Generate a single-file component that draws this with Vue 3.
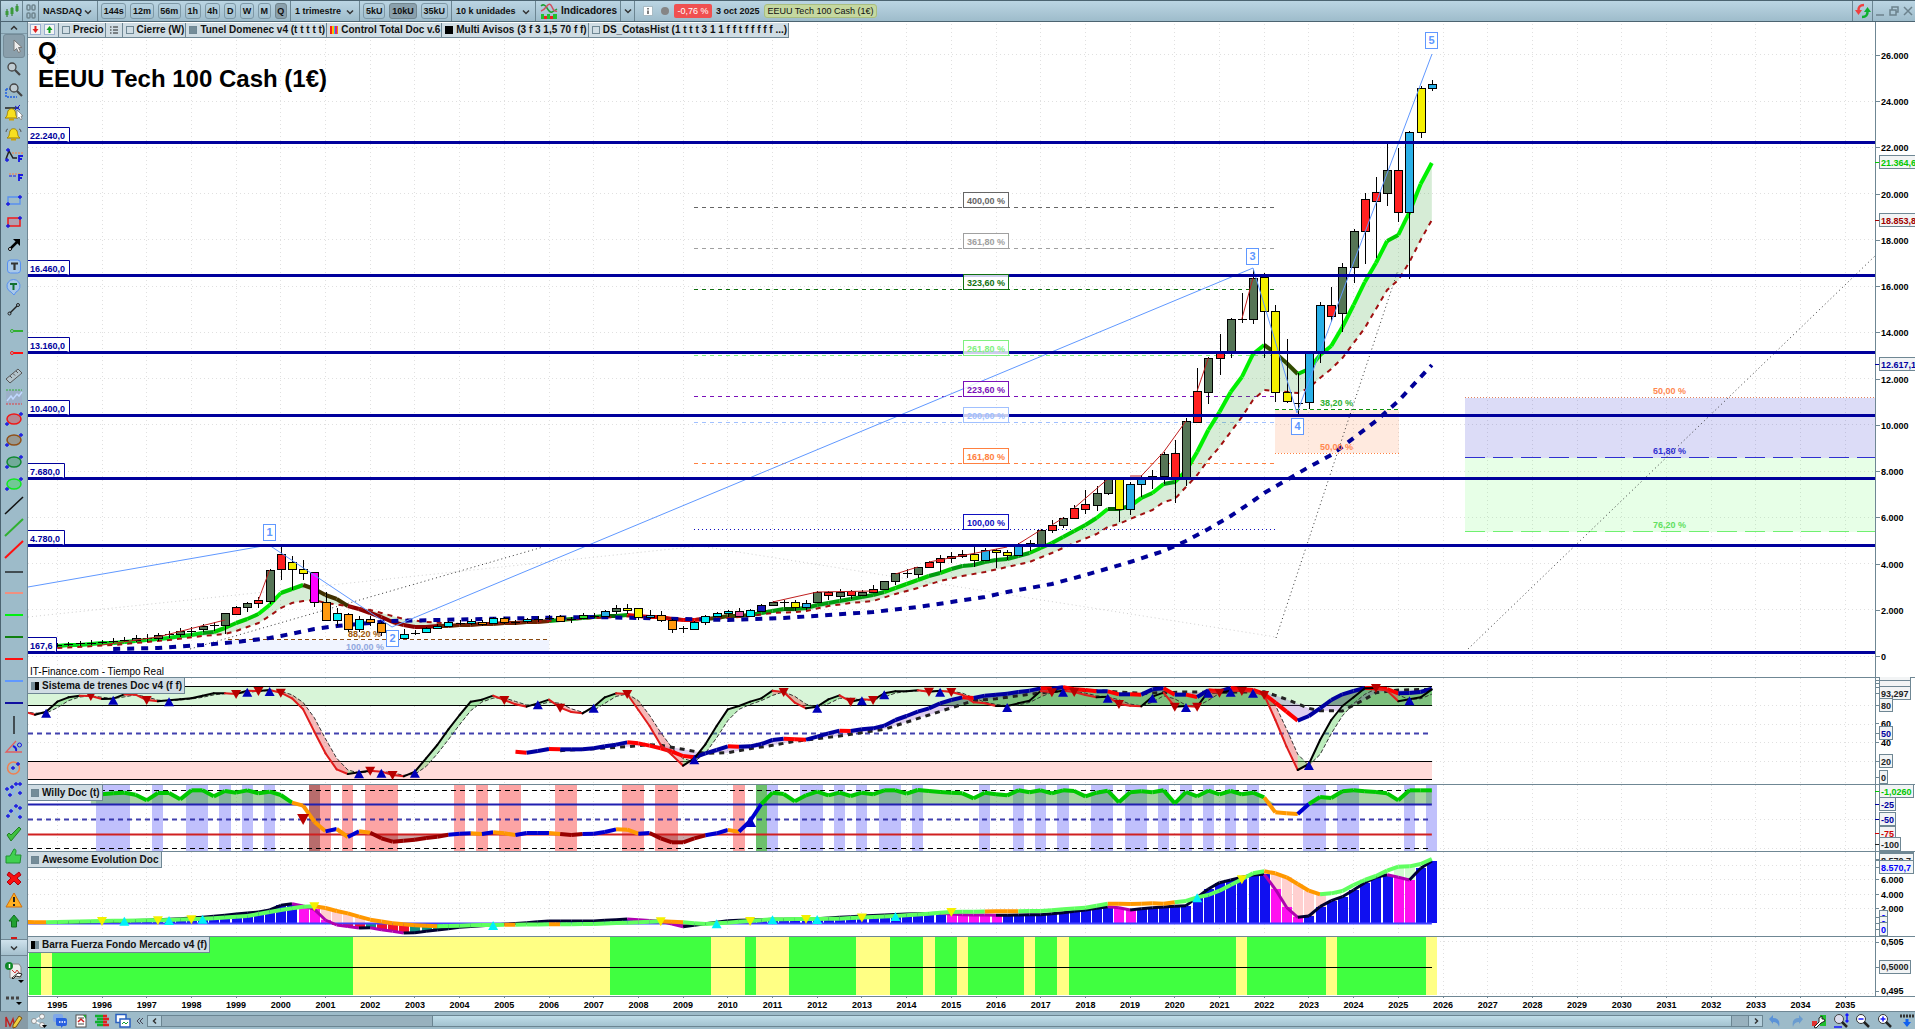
<script setup>
import { ref, computed, onMounted, onBeforeUnmount } from 'vue'

const AXIS = 40
const charts = ref(null)
const total = ref(window.innerWidth - 28)
let observer
onMounted(() => {
  observer = new ResizeObserver(([e]) => { total.value = Math.round(e.contentRect.width) })
  observer.observe(charts.value)
})
onBeforeUnmount(() => observer.disconnect())

const w = computed(() => total.value - AXIS)
const scale = computed(() => w.value / 1847)
/* quarter index (0 = first quarter of 1995) to x */
const X = (k) => (29.3 + 11.175 * k) * scale.value
/* design column to x */
const P = (x) => (x - 28) * scale.value
const T = (v) => 660 + v / 3
const price = (p) => 656 - p * 0.02312

const years = Array.from({ length: 41 }, (_, i) => 1995 + i)
const thousands = [0, 2000, 4000, 6000, 8000, 10000, 12000, 14000, 16000, 18000, 20000, 22000, 24000, 26000]
const fmt = (n) => (n ? n / 1000 + '.000' : '0')

const frames = ['144s', '12m', '56m', '1h', '4h', 'D', 'W', 'M', 'Q']
const units = ['5kU', '10kU', '35kU']

const G = '#567556', R = '#ff2020', Y = '#f5f000', B = '#29b0e8', C = '#00f0f5', O = '#ff9a10', K = '#000', M = '#ff00ff', N = '#1414b8', L = '#30e030'
/* quarter, body top, body bottom, high, low, colour */
const candles = [
  [0, 645, 645, 643, 647, K], [1, 644, 644, 642, 646, K], [2, 643, 643, 641, 646, K], [3, 643, 643, 640, 645, K], [4, 642, 642, 640, 644, K],
  [5, 641, 641, 638, 643, K], [6, 640, 640, 637, 642, K], [7, 638, 640, 635, 642, G], [8, 638, 638, 634, 642, K], [9, 635, 638, 633, 641, G], [10, 634, 634, 631, 638, K],
  [11, 631, 634, 628, 637, G], [12, 631, 631, 627, 636, K], [13, 626, 629, 624, 632, G], [14, 625, 625, 622, 631, K], [15, 613, 625, 613, 634, G],
  [16, 607, 614, 606, 615, R], [17, 603, 607, 602, 612, G], [18, 600, 603, 597, 608, R], [19, 570, 601, 569, 604, G], [20, 554, 569, 546, 580, R],
  [21, 562, 569, 556, 590, Y], [22, 569, 573, 560, 580, Y], [23, 572, 602, 572, 607, M], [24, 602, 620, 592, 621, O], [25, 613, 620, 608, 626, C],
  [26, 614, 629, 613, 632, O], [27, 619, 629, 616, 632, C], [28, 619, 622, 616, 626, O], [29, 623, 632, 622, 636, O], [31, 634, 638, 629, 639, C],
  [32, 633, 633, 630, 635, K], [33, 628, 632, 627, 633, C], [34, 626, 628, 624, 629, C], [35, 622, 626, 621, 627, C], [36, 623, 623, 620, 625, K],
  [37, 621, 623, 619, 625, C], [38, 622, 624, 620, 626, O], [39, 618, 623, 617, 624, C], [40, 618, 622, 617, 624, O], [41, 622, 622, 620, 625, K],
  [42, 619, 621, 618, 623, C], [43, 619, 619, 616, 622, K], [44, 618, 618, 615, 620, K], [45, 616, 621, 615, 622, O], [46, 619, 619, 617, 623, K],
  [47, 615, 618, 613, 619, L], [48, 616, 616, 613, 618, K], [49, 611, 616, 610, 617, B], [50, 608, 611, 605, 614, G], [51, 608, 610, 604, 614, Y],
  [52, 608, 617, 608, 620, Y], [53, 615, 617, 610, 619, B], [54, 615, 620, 611, 622, O], [55, 620, 629, 619, 633, O], [56, 628, 628, 626, 633, K],
  [57, 622, 629, 621, 629, C], [58, 616, 622, 615, 625, C], [59, 613, 616, 612, 617, C], [60, 611, 613, 610, 617, C], [61, 611, 616, 608, 616, '#e0509a'],
  [62, 610, 616, 609, 617, C], [63, 605, 611, 604, 611, N], [64, 602, 605, 601, 606, G], [65, 602, 602, 600, 607, K], [66, 602, 607, 600, 611, Y],
  [67, 603, 607, 600, 610, B], [68, 592, 602, 591, 603, G], [69, 592, 595, 591, 600, R], [70, 592, 596, 589, 599, G], [71, 591, 595, 590, 599, R],
  [72, 592, 595, 590, 596, G], [73, 589, 592, 585, 593, R], [74, 581, 589, 581, 590, G], [75, 573, 581, 573, 585, G], [76, 573, 573, 569, 578, K],
  [77, 567, 574, 567, 578, G], [78, 562, 567, 561, 568, R], [79, 558, 562, 555, 572, R], [80, 556, 558, 552, 563, R], [81, 554, 556, 550, 558, R],
  [82, 554, 560, 547, 567, Y], [83, 550, 560, 548, 561, B], [84, 550, 552, 549, 568, Y], [85, 552, 555, 550, 560, Y], [86, 544, 555, 543, 556, B],
  [87, 543, 543, 540, 551, K], [88, 530, 544, 529, 545, G], [89, 525, 530, 520, 533, R], [90, 518, 525, 517, 528, G], [91, 508, 518, 505, 519, R],
  [92, 504, 509, 490, 514, R], [93, 493, 505, 486, 511, G], [94, 479, 493, 477, 495, G], [95, 479, 509, 479, 522, Y], [96, 484, 509, 482, 515, B],
  [97, 478, 484, 475, 497, B], [98, 476, 476, 470, 489, K], [99, 454, 476, 452, 484, G], [100, 453, 478, 440, 503, R], [101, 421, 478, 418, 486, G],
  [102, 391, 422, 368, 423, R], [103, 358, 392, 357, 404, G], [104, 352, 358, 334, 375, R], [105, 319, 352, 318, 358, G], [106, 319, 319, 293, 323, K],
  [107, 278, 319, 270, 324, G], [108, 277, 311, 273, 358, Y], [109, 311, 392, 305, 402, Y], [110, 392, 401, 339, 403, Y], [111, 403, 403, 373, 414, K],
  [112, 353, 402, 352, 409, B], [113, 305, 353, 302, 363, B], [114, 305, 316, 287, 322, R], [115, 267, 313, 263, 332, G], [116, 231, 267, 229, 283, G],
  [117, 199, 231, 193, 264, R], [118, 192, 201, 177, 258, R], [119, 170, 193, 143, 206, G], [120, 170, 212, 148, 222, R], [121, 132, 212, 131, 279, B],
  [122, 88, 132, 86, 138, Y], [123, 84, 88, 80, 91, B],
]

const trend = [646, 645, 645, 644, 643, 643, 642, 641, 640, 639, 638, 636, 635, 633, 632, 628, 623, 619, 614, 605, 593, 589, 585, 589, 595, 599, 606, 609, 613, 617, 622, 625, 627, 627, 626, 626, 625, 625, 624, 624, 623, 623, 622, 622, 621, 620, 619, 618, 617, 616, 616, 615, 616, 617, 617, 619, 620, 620, 619, 618, 616, 616, 615, 613, 611, 609, 609, 608, 605, 603, 601, 599, 597, 595, 592, 588, 584, 580, 576, 573, 569, 566, 565, 562, 560, 559, 556, 553, 548, 543, 537, 531, 525, 518, 509, 509, 506, 498, 493, 484, 482, 471, 452, 430, 412, 392, 377, 354, 345, 353, 363, 374, 369, 355, 346, 327, 305, 282, 263, 241, 235, 212, 184, 163]
const trendParts = computed(() => trend.slice(1).map((y, i) => {
  const rise = trend[i] - y
  let color = rise > 7 ? '#00f000' : rise > 3 ? '#00cc00' : rise > 0 ? '#009c10' : '#006000'
  if (i >= 22 && i < 26) color = '#403000'
  if (i >= 26 && i < 34) color = '#8b0000'
  if (i >= 34 && i < 44) color = '#6a2400'
  if (i >= 51 && i < 58) color = '#e00000'
  if (i >= 58 && i < 62) color = '#404800'
  if (i >= 108 && i < 111) color = '#304a00'
  if (i <= 12) color = '#00d818'
  return { x1: X(i), x2: X(i + 1), y1: trend[i], y2: y, color }
}))
const lower = [[0, 648], [5, 645], [10, 640], [13, 636], [15, 634], [16, 631], [17, 627], [18, 623], [19, 616], [20, 608], [21, 603], [22, 601], [23, 600], [24, 603], [26, 606], [28, 610], [29, 613], [31, 619], [33, 622], [36, 624], [40, 623], [44, 621], [48, 618], [52, 616], [56, 619], [60, 618], [62, 616], [64, 613], [66, 612], [67, 611], [69, 606], [71, 603], [73, 601], [75, 594], [77, 588], [79, 581], [81, 576], [83, 572], [85, 567], [87, 562], [89, 553], [91, 543], [93, 534], [94, 527], [95, 524], [96, 519], [98, 510], [99, 502], [100, 499], [101, 487], [102, 475], [103, 460], [104, 447], [105, 432], [106, 417], [107, 400], [108, 390], [111, 393], [112, 388], [113, 378], [114, 369], [115, 358], [116, 343], [117, 328], [118, 309], [119, 290], [120, 280], [121, 262], [122, 240], [123, 220]]
const average = [[5, 649], [9, 648], [13, 645], [16, 642], [19, 638], [20, 636], [23, 629], [25, 626], [28, 623], [30, 621], [34, 620], [38, 619], [43, 618], [48, 617], [56, 619], [60, 620], [65, 618], [69, 615], [73, 612], [77, 607], [80, 602], [83, 597], [85, 592], [89, 584], [92, 575], [96, 562], [99, 551], [101, 541], [103, 529], [105, 516], [107, 501], [108, 493], [110, 480], [112, 467], [114, 455], [116, 438], [118, 421], [120, 401], [123, 365]]
const highs = [[[4, 645], [9, 637], [15, 620]], [[18, 600], [19, 570]], [[64, 602], [68, 592], [73, 591]], [[75, 574], [77, 567]], [[78, 562], [85, 547]], [[86, 544], [88, 530]], [[89, 525], [90, 518]], [[91, 508], [94, 479]], [[96, 476], [97, 476], [99, 452], [101, 421]], [[102, 391], [103, 358]], [[106, 319], [107, 278]]]
const line = (pts, fx = X, fy = (y) => y) => pts.map(([k, y]) => `${fx(k)},${fy(y)}`).join(' ')
const tunnel = computed(() => line([...trend.map((y, k) => [k, y]), ...[...lower].reverse()]))

const levels = [['22.240,0', 142, 42], ['16.460,0', 275, 42], ['13.160,0', 352, 42], ['10.400,0', 415, 42], ['7.680,0', 478, 37], ['4.780,0', 545, 37], ['167,6', 652, 29]]
const fibs = [
  ['400,00 %', 207, '#666666', '4 4'], ['361,80 %', 248, '#a0a0a0', '4 4'], ['323,60 %', 289, '#107010', '4 4'], ['261,80 %', 355, '#80f080', '4 4'],
  ['223,60 %', 396, '#7a10b8', '4 4'], ['200,00 %', 422, '#a0c0ff', '4 4'], ['161,80 %', 463, '#ff8040', '4 4'], ['100,00 %', 529, '#1010c0', '1 3'],
]
const waves = [[28, 587], [269, 545], [392, 627], [1253, 268], [1297, 413], [1432, 54]]
const marks = [[1, 269, 532], [2, 392, 638], [3, 1252, 256], [4, 1297, 426], [5, 1431, 40]]
const priceTags = [['21.364,6', 162, '#00c800'], ['18.853,8', 220, '#a00000'], ['12.617,1', 364, '#0000a0']]

/* oscillator samples, in thirds of a pixel below the base row */
const fast = [155, 164, 155, 125, 112, 107, 108, 117, 116, 103, 104, 120, 124, 121, 118, 115, 107, 100, 100, 102, 92, 93, 90, 98, 115, 148, 215, 280, 328, 342, 337, 332, 335, 345, 349, 335, 295, 255, 208, 165, 125, 119, 107, 120, 133, 140, 130, 119, 143, 156, 160, 140, 112, 100, 102, 150, 198, 255, 285, 317, 295, 253, 198, 148, 138, 125, 115, 92, 96, 128, 145, 140, 118, 106, 125, 118, 120, 100, 94, 94, 91, 95, 92, 96, 105, 127, 130, 138, 138, 130, 122, 93, 97, 92, 96, 105, 112, 110, 132, 137, 139, 110, 98, 140, 138, 140, 95, 98, 92, 93, 95, 105, 180, 260, 330, 312, 240, 180, 138, 112, 85, 84, 92, 124, 118, 112, 88]
const signal = fast.map((v, i) => (i ? (v + fast[i - 1]) / 2 + (i > 1 ? (fast[i - 2] - v) / 12 : 0) : v))
const F = (i) => X(i - 3)
const fastParts = computed(() => fast.slice(1).map((v, i) => ({
  x1: F(i), x2: F(i + 1), y1: T(fast[i]), y2: T(v), color: v > fast[i] ? '#e01c1c' : '#000',
  area: `${F(i)},${T(fast[i])} ${F(i + 1)},${T(v)} ${F(i + 1)},${T(signal[i + 1])} ${F(i)},${T(signal[i])}`,
  fill: v > fast[i] ? 'rgba(230,80,80,.4)' : 'rgba(90,210,90,.4)',
})))
const signalLine = computed(() => signal.map((v, i) => `${F(i)},${T(v)}`).join(' '))
const slow = [275, 278, 273, 267, 268, 268, 268, 265, 259, 254, 247, 250, 257, 265, 275, 288, 292, 280, 270, 259, 260, 259, 252, 240, 236, 238, 239, 230, 220, 212, 213, 208, 205, 197, 180, 168, 155, 145, 130, 120, 112, 114, 107, 104, 101, 96, 92, 85, 86, 82, 88, 90, 94, 94, 103, 103, 104, 88, 85, 104, 104, 111, 91, 94, 84, 88, 90, 102, 128, 155, 182, 168, 145, 120, 103, 93, 84, 85, 87, 100, 99, 96, 86]
const slowParts = computed(() => slow.slice(1).map((v, i) => ({ x1: X(41 + i), x2: X(42 + i), y1: T(slow[i]), y2: T(v), color: v > slow[i] ? '#ff0000' : '#0000a0' })))
const slowSignal = [[45, 272], [48, 266], [51, 260], [53, 254], [54, 256], [56, 268], [58, 280], [60, 278], [62, 266], [64, 256], [66, 244], [70, 228], [74, 208], [78, 165], [82, 122], [84, 116], [87, 103], [90, 90], [93, 92], [97, 100], [101, 96], [104, 97], [108, 95], [110, 118], [112, 145], [113, 152], [115, 153], [117, 118], [118, 98], [120, 90], [123, 88]]
const slowPts = slow.map((v, i) => [41 + i, v])
const ribbon = computed(() => line([...slowPts.slice(4), ...[...slowSignal].reverse()], X, T))
const strong = computed(() => line([[77, 136], ...slowPts.slice(37).map(([k, v]) => [k, Math.min(v, 136)]), [123, 136]], X, T))
const downs = [3, 8, 16, 18, 20, 28, 30, 40, 45, 51, 65, 71, 73, 78, 80, 89, 91, 95, 100, 102, 104, 106, 108, 118]
const ups = [-1, 5, 10, 17, 19, 27, 29, 32, 43, 48, 57, 68, 72, 74, 79, 85, 90, 94, 98, 101, 103, 105, 107, 112, 121]
const tri = (x, y, up, r = 5) => up ? `${x - r},${y + r} ${x + r},${y + r} ${x},${y - r + 1}` : `${x - r},${y - r + 1} ${x + r},${y - r + 1} ${x},${y + r}`

const buyBands = [[3.5, 6.5], [8.5, 9.5], [11.5, 13.5], [14.5, 15.5], [16.5, 17.5], [18.5, 19.5], [63.5, 64.5], [66.5, 68.5], [69.5, 70.5], [71.5, 72.5], [73.5, 75.5], [76.5, 77.5], [82.5, 83.5], [85.5, 86.5], [87.5, 88.5], [89.5, 90.5], [92.5, 94.5], [95.5, 97.5], [98.5, 99.5], [100.5, 101.5], [102.5, 103.5], [104.5, 105.5], [106.5, 107.5], [111.5, 113.5], [114.5, 116.5], [120.5, 121.5], [122.5, 123.5]]
const sellBands = [[23.5, 24.5], [25.5, 26.5], [27.5, 30.5], [35.5, 36.5], [37.5, 38.5], [39.5, 41.5], [44.5, 46.5], [50.5, 52.5], [53.5, 55.5], [60.5, 61.5]]
const willy = [405, 403, 400, 398, 404, 421, 399, 399, 418, 391, 391, 409, 393, 398, 391, 400, 395, 405, 428, 437, 485, 514, 507, 531, 514, 518, 535, 545, 542, 539, 534, 530, 524, 521, 520, 522, 517, 520, 525, 519, 519, 519, 522, 525, 522, 521, 516, 508, 509, 521, 519, 535, 547, 547, 535, 526, 520, 510, 515, 483, 432, 398, 402, 424, 406, 395, 406, 398, 408, 398, 403, 391, 391, 401, 390, 393, 396, 398, 400, 415, 398, 403, 406, 391, 397, 391, 400, 391, 393, 409, 398, 392, 427, 397, 394, 397, 391, 430, 396, 409, 392, 403, 393, 403, 398, 412, 457, 460, 462, 432, 411, 414, 394, 391, 394, 396, 400, 421, 391, 391, 391]
const willyParts = computed(() => willy.slice(1).map((v, i) => {
  const a = willy[i]
  const color = a < 433 && v < 433 ? '#00c800' : a + v > 1046 ? '#980000' : v > a ? '#ff9800' : '#0000d0'
  return { x1: X(3 + i), x2: X(4 + i), y1: T(a), y2: T(v), color }
}))
const willyHigh = computed(() => line([[3, 433], ...willy.map((v, i) => [3 + i, Math.min(v, 433)]), [123, 433]], X, T))
const willyLow = computed(() => line([[3, 523], ...willy.map((v, i) => [3 + i, Math.max(v, 523)]), [123, 523]], X, T))

/* sparse points, filled in for every quarter */
const fill = (pts) => {
  const out = []
  for (let i = 1; i < pts.length; i++) {
    const [k0, v0] = pts[i - 1], [k1, v1] = pts[i]
    for (let k = k0; k < k1; k++) out.push([k, v0 + (v1 - v0) * (k - k0) / (k1 - k0)])
  }
  return [...out, pts[pts.length - 1]]
}
const momentum = fill([[0, 787], [6, 783], [10, 778], [12, 774], [14, 769], [16, 762], [18, 756], [19, 750], [20, 736], [21, 731], [22, 738], [23, 748], [24, 780], [25, 795], [27, 804], [28, 803], [29, 809], [31, 819], [32, 818], [34, 810], [36, 802], [40, 793], [44, 783], [48, 783], [51, 777], [54, 784], [56, 800], [57, 796], [60, 782], [64, 778], [68, 776], [72, 768], [76, 762], [79, 760], [81, 764], [84, 766], [88, 764], [90, 758], [92, 750], [94, 740], [95, 743], [96, 750], [98, 743], [100, 739], [101, 737], [102, 712], [103, 687], [104, 668], [105, 660], [106, 652], [107, 645], [108, 643], [109, 688], [110, 742], [111, 772], [112, 768], [113, 740], [114, 722], [115, 710], [116, 690], [117, 668], [118, 652], [119, 644], [120, 652], [121, 660], [122, 625], [123, 603]])
const base = fill([[-3, 786], [-1, 787], [4, 783], [10, 780], [14, 775], [17, 768], [20, 750], [22, 740], [23, 739], [24, 744], [25, 753], [26, 760], [27, 770], [28, 779], [30, 790], [32, 796], [34, 799], [38, 795], [44, 793], [48, 792], [54, 784], [56, 787], [58, 792], [60, 788], [64, 778], [70, 776], [76, 766], [80, 756], [82, 755], [84, 754], [88, 753], [92, 743], [94, 731], [96, 732], [98, 730], [99, 731], [101, 723], [102, 712], [103, 705], [104, 692], [105, 675], [106, 658], [107, 640], [108, 634], [109, 640], [110, 652], [111, 672], [112, 692], [113, 703], [114, 700], [115, 693], [116, 675], [117, 660], [118, 648], [119, 632], [120, 620], [121, 619], [122, 612], [123, 597]])
const bars = computed(() => momentum.slice(1).map(([k, v], i) => {
  const down = v > momentum[i][1]
  return { x: X(k) - 4.5, w: 10, y: T(Math.min(v, 790)), h: Math.abs(v - 790) / 3, color: v > 790 ? (down ? '#f01030' : '#109080') : (down ? '#ff10f0' : '#1010f0') }
}))
const gapBars = computed(() => [24, 25, 26, 27, 109, 110, 111, 112, 113, 120, 121].map((k) => {
  const top = base.find((p) => p[0] === k)[1], bottom = Math.min(790, momentum.find((p) => p[0] === k)[1])
  return { x: X(k) - 4.5, y: T(top), h: Math.max(0, bottom - top) / 3, color: k > 115 ? '#d0fad0' : '#ffd0d0' }
}))
const parts = (pts, rise, fall) => pts.slice(1).map(([k, v], i) => ({ x1: X(pts[i][0]), x2: X(k), y1: T(pts[i][1]), y2: T(v), color: v > pts[i][1] ? fall : rise }))
const momentumParts = computed(() => parts(momentum, '#000030', '#b000b0'))
const flats = [[43, 44], [47, 48], [59, 62], [86, 89], [98, 101], [102, 103]]
const baseParts = computed(() => parts(base, '#60ff60', '#ff9800').map((p, i) => {
  const k = i - 3
  if (flats.some(([a, b]) => k >= a - 3 && k < b - 3)) return { ...p, color: k < 50 || (k > 82 && k < 100) ? '#ff9800' : '#60ff60' }
  return p
}))
const at = (k) => T(base.find((p) => p[0] === k)[1])
const yellowMarks = [4, 9, 12, 23, 54, 62, 67, 72, 80, 106]
const cyanMarks = [6, 10, 13, 39, 59, 64, 68, 75, 102]

const neutral = [[-1.5, -0.5], [26.5, 49.5], [58.5, 61.5], [62.5, 65.5], [71.5, 74.5], [77.5, 78.5], [80.5, 81.5], [86.5, 87.5], [89.5, 90.5], [105.5, 106.5], [113.5, 114.5], [122.5, 123.5]]

/* y, label, colour, boxed width */
const oscTags = [[680, '', '#000', 18], [683, '', '#000', 31], [687, '', '#000', 31], [723, '60', '#000', 0], [742, '40', '#000', 0], [693, '93,297', '#222', 31], [705, '80', '#222', 13], [733, '50', '#0000a0', 13], [761, '20', '#222', 13], [777, '0', '#222', 8]]
const willyTags = [[791, '-1,0260', '#00c800', 34], [804, '-25', '#0000a0', 16], [819, '-50', '#0000a0', 16], [833, '-75', '#d00000', 16], [844, '-100', '#222', 21]]
const awesomeTags = [[859, '', '#222', 34], [860, '8.570,7', '#222', 34], [867, '8.570,7', '#0000ff', 34], [879, '6.000', '#000', 0], [894, '4.000', '#000', 0], [908, '2.000', '#000', 0], [917, '0', '#0000ff', 8], [923, '0', '#0000ff', 8], [929, '0', '#0000ff', 8]]
const forceTags = [[942, '0,505', '#000', 0], [967, '0,5000', '#222', 31], [991, '0,495', '#000', 0]]

const seg = (x1, y1, x2, y2, c, s = 2) => `<path d="M${x1} ${y1}L${x2} ${y2}" stroke="${c}" stroke-width="${s}" fill="none"/>`
const plus = (x, y, c = '#1818e0') => `<path d="M${x - 2} ${y}h4M${x} ${y - 2}v4" stroke="${c}" stroke-width="1.3"/>`
const ellipse = (c) => `<ellipse cx="14" cy="11" rx="7" ry="5" fill="${c}" fill-opacity=".3" stroke="${c}" stroke-width="1.5"/>` + plus(7, 16) + plus(21, 6)
const lens = (x, y) => `<circle cx="${x}" cy="${y}" r="4" fill="#c0ccd2" stroke="#444" stroke-width="1.3"/><path d="M${x + 3} ${y + 3}l5 5" stroke="#444" stroke-width="2.2"/>`
const bell = '<path d="M7 15c3-2 2-5 3-7 1-3 6-3 7 0 1 2 0 5 3 7z" fill="#f8e020" stroke="#a08000"/><path d="M11 16.5h5" stroke="#d0a000" stroke-width="2"/>'
const tools = [
  ['Seleccionar', '<path d="M11 5v11l2.5-2.5 2 4 2-1-2-4H19z" fill="#eee" stroke="#777"/>'],
  ['Lupa', lens(12, 9)],
  ['Zoom de zona', '<path d="M6 9v8h11M6 9h4" fill="none" stroke="#2060e0" stroke-width="1.5" stroke-dasharray="2 1"/>' + lens(14, 8)],
  ['Alerta en línea', '<path d="M5 6h14" stroke="#222" stroke-width="1.5"/><g transform="translate(-2 1)">' + bell + '</g><path d="M15 4l5 4M20 3l-5 5" stroke="#1818e0"/><path d="M17 8v9l2-2 2 3 1-1-1-3h2z" fill="#fff" stroke="#777" stroke-width=".7"/>'],
  ['Alerta', bell + '<path d="M6 9q0-3 2-3M21 9q0-3-2-3" fill="none" stroke="#555"/>'],
  ['Fibonacci extensión', '<path d="M6 14l3-8 4 7h4" fill="none" stroke="#222" stroke-width="1.5"/>' + plus(8, 5) + plus(7, 15) + '<path d="M12 8h11" stroke="#ff8040" stroke-dasharray="2 1"/><path d="M19 17v-6h4M19 14h3" fill="none" stroke="#1818e0" stroke-width="1.8"/>'],
  ['Fibonacci', '<path d="M9 7h13" stroke="#ff8040" stroke-dasharray="2 1"/><path d="M9 9h8" stroke="#1818e0" stroke-dasharray="3 1"/><path d="M19 14V8h4M19 11h3" fill="none" stroke="#1818e0" stroke-width="1.8"/>'],
  ['Zona', '<path d="M8 15V8h12v7z" fill="none" stroke="#5890f0" stroke-width="1.3"/>' + plus(8, 15) + plus(20, 8)],
  ['Rectángulo', '<rect x="8" y="7" width="12" height="8" fill="#b0a0b0" stroke="#f01818" stroke-width="1.5"/>' + plus(8, 15) + plus(20, 7)],
  ['Flecha', '<path d="M10 16l7-7" stroke="#000" stroke-width="2.5"/><path d="M13 6h7v7z"/><circle cx="10" cy="16" r="1.5" fill="#fff" stroke="#000"/>'],
  ['Texto', '<rect x="7.5" y="5" width="13" height="13" rx="3" fill="#a8c8e8" stroke="#5890f0"/><path d="M11 8.5h7M14.5 8.5V15" stroke="#333" stroke-width="2.2"/>'],
  ['Globo de texto', '<path d="M11 16a6.5 6.5 0 1 1 5 0l-2 3z" fill="#a8c8e8" stroke="#5890f0"/><path d="M10 8h7M13.5 8v6" stroke="#107030" stroke-width="2"/>'],
  ['Segmento', seg(10, 15, 17, 8, '#222', 1.5) + '<circle cx="9.5" cy="15.5" r="1.5" fill="none" stroke="#222"/><circle cx="18" cy="7" r="1.5" fill="none" stroke="#222"/>'],
  ['Semirrecta verde', seg(13, 11, 23, 11, '#30b030') + '<circle cx="12" cy="11" r="1.5" fill="#9dbbc9" stroke="#30b030"/>'],
  ['Semirrecta roja', seg(13, 11, 23, 11, '#ff1010') + '<circle cx="12" cy="11" r="1.5" fill="#9dbbc9" stroke="#ff1010"/>'],
  ['Regla', '<path d="M6 15l12-10 4 4-12 10z" fill="#b4c4cc" stroke="#555"/><path d="M10 12l2 2M13 9.5l2 2M16 7l2 2" stroke="#555"/>'],
  ['Canal', '<rect x="6" y="4" width="16" height="14" fill="#9cb0c8"/><path d="M6 4h16" stroke="#30b030" stroke-dasharray="2 1"/><path d="M6 18h16" stroke="#e04040" stroke-dasharray="2 1"/><path d="M7 15l4-5 2 3 4-5 2 2 3-4" fill="none" stroke="#c0d8ff" stroke-width="1.5"/>'],
  ['Elipse roja', ellipse('#f01818')], ['Elipse marrón', ellipse('#905018')], ['Elipse verde', ellipse('#108830')], ['Elipse lima', ellipse('#10e820')],
  ['Recta negra', seg(5, 19, 23, 2, '#111', 1.5)], ['Recta verde', seg(5, 19, 23, 2, '#30b030')], ['Recta roja', seg(5, 19, 23, 2, '#ff1010')],
  ['Horizontal negra', seg(5, 11, 23, 11, '#111', 1.3)], ['Horizontal salmón', seg(5, 11, 23, 11, '#f09080')], ['Horizontal lima', seg(5, 11, 23, 11, '#00f010')],
  ['Horizontal verde', seg(5, 11, 23, 11, '#108010')], ['Horizontal roja', seg(5, 11, 23, 11, '#ff1010')], ['Horizontal azul', seg(5, 11, 23, 11, '#6098ff')],
  ['Horizontal marino', seg(5, 11, 23, 11, '#1010a0')], ['Vertical', seg(14, 2, 14, 20, '#111', 1.3)],
  ['Ángulo', '<path d="M22 16H6L16 5" fill="none" stroke="#e06060" stroke-width="1.3"/><path d="M16 15c1-3-1-4-3-5" fill="none" stroke="#1818e0" stroke-width="2"/><circle cx="19.5" cy="9" r="2" fill="none" stroke="#1818e0"/>'],
  ['Círculo', '<circle cx="13.5" cy="11" r="6" fill="none" stroke="#f08050" stroke-width="1.5"/>' + plus(13, 11) + plus(18, 7)],
  ['Ondas de Elliott', '<path d="M6 15l4-8 3 9 4-11 4 9" fill="none" stroke="#88b8f0"/>' + plus(7, 10) + plus(12, 8) + plus(10, 16) + plus(16, 5) + plus(20, 14) + plus(20, 5)],
  ['Ondas ABC', '<path d="M7 16l5-9 6 9 3-11" fill="none" stroke="#88b8f0"/>' + plus(8, 15) + plus(11, 10) + plus(16, 5) + plus(20, 7) + plus(20, 16)],
  ['Aceptar', '<path d="M7 12l4 6L21 6l-2-2-8 8-2-2z" fill="#40c040" stroke="#208020"/>'],
  ['Me gusta', '<path d="M6 11h4l4-7c3 0 2 4 1 6h6l-1 8H6z" fill="#40d050" stroke="#209030"/>'],
  ['Cancelar', '<path d="M9 5l5 4 5-4 2 3-4 3 4 4-3 3-4-4-4 4-3-3 4-4-4-3z" fill="#f81010" stroke="#b00010"/>'],
  ['Aviso', '<path d="M14 4l8 14H6z" fill="#ffb020" stroke="#d07010"/><path d="M14 8v5M14 15v2" stroke="#222" stroke-width="2"/>'],
  ['Flecha arriba', '<path d="M14 5l5 6h-2.5v6h-5v-6H9z" fill="#20a030" stroke="#107020"/>'],
].map(([name, svg]) => ({ name, svg }))
</script>

<template>
  <div class="app">
    <header class="toolbar">
      <div class="cell logo"><svg width="20" height="20" viewBox="0 0 20 20"><path d="M5 8v8M10 6v9M15 3v8" stroke="#207020" /><path d="M3.5 10h3v4h-3zM8.5 7h3v6h-3zM13.5 5h3v5h-3z" fill="#3a9a3a" /></svg></div>
      <div class="cell link"><svg width="14" height="20" viewBox="0 0 14 20"><g fill="none" stroke="#6f858f" stroke-width="1.5"><rect x="3" y="4" width="3" height="5" rx="1" /><rect x="8" y="4" width="3" height="5" rx="1" /><rect x="3" y="12" width="3" height="5" rx="1" /><rect x="8" y="12" width="3" height="5" rx="1" /></g></svg></div>
      <label class="cell pick market"><select aria-label="Mercado"><option>NASDAQ</option></select><svg class="chev" viewBox="0 0 8 8"><path d="M1 2.5l3 3 3-3" /></svg></label>
      <div class="cell group frames"><button v-for="f in frames" :key="f" :class="{ on: f === 'Q' }">{{ f }}</button></div>
      <label class="cell pick period"><select aria-label="Periodo"><option>1 trimestre</option></select><svg class="chev" viewBox="0 0 8 8"><path d="M1 2.5l3 3 3-3" /></svg></label>
      <div class="cell group unitset"><button v-for="u in units" :key="u" :class="{ on: u === '10kU' }">{{ u }}</button></div>
      <label class="cell pick amount"><select aria-label="Unidades"><option>10 k unidades</option></select><svg class="chev" viewBox="0 0 8 8"><path d="M1 2.5l3 3 3-3" /></svg></label>
      <button class="cell indic"><svg width="18" height="18" viewBox="0 0 18 18"><path d="M1 4q3-3 6 2t5 4 5-3" fill="none" stroke="#20a030" stroke-width="1.5" /><path d="M1 9q3-1 6-5t5 1 5 4" fill="none" stroke="#d05060" stroke-width="1.5" /><path d="M1 12h3v5H1zM7 12h3v5H7zM13 12h4v5h-4z" fill="#20c030" /><path d="M4 14h3v3H4zM10 14h3v3h-3z" fill="#f02020" /></svg><span>Indicadores</span></button>
      <button class="cell more" aria-label="Más indicadores"><svg class="chev" viewBox="0 0 8 8"><path d="M1 2.5l3 3 3-3" /></svg></button>
      <div class="status">
        <span class="info"><svg width="10" height="10" viewBox="0 0 10 10"><rect x=".5" y=".5" width="9" height="9" fill="#fff" stroke="#a9bcc5" /><path d="M5 2v1.5M5 4.5V8" stroke="#555" stroke-width="1.5" /></svg></span>
        <span class="dot"></span>
        <span class="loss">-0,76 %</span>
        <span class="date">3 oct 2025</span>
        <span class="instrument">EEUU Tech 100 Cash (1€)</span>
      </div>
      <div class="wincontrols">
        <button class="sync" aria-label="Sincronizar"><svg width="16" height="16" viewBox="0 0 16 16"><path d="M9 2Q3 2 3.5 8" fill="none" stroke="#f04040" stroke-width="2.5" /><path d="M0 7h7l-3.5 5z" fill="#f04040" /><path d="M7 14q6 0 5.5-6" fill="none" stroke="#10b030" stroke-width="2.5" /><path d="M9 9h7l-3.5-5z" fill="#10b030" /></svg></button>
        <button aria-label="Minimizar"><svg viewBox="0 0 10 10"><path d="M1 9h8" /></svg></button>
        <button aria-label="Restaurar"><svg viewBox="0 0 10 10"><path d="M3 3.5V1h6v5H7M1 4h6v5H1z" /></svg></button>
        <button aria-label="Cerrar"><svg viewBox="0 0 10 10"><path d="M1 1l8 8M9 1L1 9" /></svg></button>
      </div>
    </header>

    <div class="body">
      <aside class="tools">
        <button class="up" aria-label="Subir"><svg class="chev" viewBox="0 0 8 8"><path d="M1 5.5l3-3 3 3" /></svg></button>
        <div class="list">
          <button v-for="(t, i) in tools" :key="t.name" :aria-label="t.name" :class="{ on: i === 0 }"><svg viewBox="0 0 28 22" v-html="t.svg"></svg></button>
        </div>
        <i class="peek"></i>
        <button class="down" aria-label="Bajar"><svg class="chev" viewBox="0 0 8 8"><path d="M1 2.5l3 3 3-3" /></svg></button>
        <button class="extra" aria-label="Configurar"><svg width="24" height="24" viewBox="0 0 24 24"><path d="M8 4h9l2 3v11H8z" fill="#eee" stroke="#888" /><path d="M10 10l3 3 2-3 3 4" fill="none" stroke="#d03030" /><circle cx="7" cy="6" r="4" fill="#108828" /><path d="M7.5 4v4" stroke="#fff" stroke-width="1.5" /><path d="M10 18l6-5 4 1-2 3-4-1-3 3z" fill="#fff" stroke="#222" /><path d="M16 20h6l-3 3z" /></svg></button>
        <button class="dots" aria-label="Más"><svg width="24" height="20" viewBox="0 0 24 20"><path d="M4 8h3M9 8h3M14 8h3" stroke="#444" stroke-width="3" /><path d="M14 12h6l-3 3z" /></svg></button>
      </aside>

      <main ref="charts" class="charts">
        <section class="panel">
          <div class="legend">
            <button class="arrows" aria-label="Ordenar"><svg width="26" height="12" viewBox="0 0 26 12"><rect x=".5" y=".5" width="10" height="10" fill="#f4f4f4" stroke="#9ab0d0" /><path d="M5.5 2v4" stroke="#e02020" stroke-width="2" /><path d="M2.5 5h6l-3 4z" fill="#e02020" /><rect x="14.5" y=".5" width="10" height="10" fill="#f4f4f4" stroke="#9ab0d0" /><path d="M19.5 5v4" stroke="#10a020" stroke-width="2" /><path d="M16.5 6h6l-3-4z" fill="#10a020" /></svg></button>
            <button><i class="box"></i>Precio</button>
            <button class="menu" aria-label="Lista"><svg width="8" height="8" viewBox="0 0 8 8"><path d="M0 1h1.5M3 1h5M0 4h1.5M3 4h5M0 7h1.5M3 7h5" stroke="#222" /></svg></button>
            <button><i class="box"></i>Cierre (W)</button>
            <button><i class="box grey"></i>Tunel Domenec v4 (t t t t t)</button>
            <button><i class="box multi"></i>Control Total Doc v.6</button>
            <button><i class="box black"></i>Multi Avisos (3 f 3 1,5 70 f f)</button>
            <button><i class="box"></i>DS_CotasHist (1 t t t 3 1 1 f f t f f f f f ...)</button>
          </div>
          <svg :width="total" height="655" :viewBox="`0 22 ${total} 655`">
            <g class="grid">
              <line v-for="y in years" :key="y" :x1="X((y - 1995) * 4)" :x2="X((y - 1995) * 4)" y1="24" y2="676" />
              <line v-for="t in thousands" :key="t" x1="0" :x2="w" :y1="price(t)" :y2="price(t)" />
            </g>
            <g class="crisp">
              <rect :x="P(228)" y="640" :width="P(549) - P(228)" height="12" fill="#f0f4ff" />
              <rect :x="P(1275)" y="410" :width="P(1399) - P(1275)" height="43" fill="#ff8040" fill-opacity=".17" />
              <rect :x="P(1465)" y="398" :width="w - P(1465)" height="60" fill="#3030d0" fill-opacity=".17" />
              <rect :x="P(1465)" y="458" :width="w - P(1465)" height="74" fill="#60ff60" fill-opacity=".15" />
              <g fill="none">
                <path :d="`M${P(228)} 639.5H${P(549)}`" stroke="#8a4a10" stroke-dasharray="4 3" />
                <path :d="`M${P(1275)} 409.5H${P(1399)}`" stroke="#109010" stroke-dasharray="4 3" />
                <path :d="`M${P(1275)} 453.5H${P(1399)}`" stroke="#ff8040" stroke-dasharray="1 2" />
                <path :d="`M${P(1465)} 397.5H${w}`" stroke="#e08060" stroke-dasharray="1 2" />
                <path :d="`M${P(1465)} 457.5H${w}`" stroke="#3030d0" stroke-dasharray="20 8" />
                <path :d="`M${P(1465)} 531.5H${w}`" stroke="#70f070" stroke-dasharray="20 8" />
              </g>
              <line v-for="f in fibs" :key="f[0]" :x1="P(694)" :x2="P(1275)" :y1="f[1] + 0.5" :y2="f[1] + 0.5" :stroke="f[2]" :stroke-dasharray="f[3]" />
            </g>
            <g class="dotted">
              <path :d="`M${P(28)} 617L${P(700)} 546L${P(1276)} 637`" stroke="#d0d0d0" />
              <path :d="`M${P(190)} 649L${P(543)} 547`" stroke="#333" />
              <path :d="`M${P(1276)} 638L${P(1398)} 270`" stroke="#333" />
              <path :d="`M${P(1468)} 649L${w} 256`" stroke="#333" />
            </g>
            <polygon :points="tunnel" fill="#30a030" fill-opacity=".2" />
            <g stroke-width="4"><line v-for="(s, i) in trendParts" :key="i" :x1="s.x1" :x2="s.x2" :y1="s.y1" :y2="s.y2" :stroke="s.color" /></g>
            <polyline :points="line(lower)" fill="none" stroke="#a01010" stroke-width="2" stroke-dasharray="5 5" />
            <polyline :points="line(average)" fill="none" stroke="#000098" stroke-width="4" stroke-dasharray="7 7" />
            <g class="crisp">
              <g v-for="c in candles" :key="c[0]">
                <line :x1="Math.round(X(c[0])) + 0.5" :x2="Math.round(X(c[0])) + 0.5" :y1="c[3]" :y2="c[4]" stroke="#000" />
                <line v-if="c[1] === c[2]" :x1="X(c[0]) - 4" :x2="X(c[0]) + 5" :y1="c[1] + 0.5" :y2="c[1] + 0.5" stroke="#000" />
                <rect v-else :x="Math.round(X(c[0])) - 3.5" :y="c[1] + 0.5" width="8" :height="c[2] - c[1]" :fill="c[5]" stroke="#000" />
              </g>
            </g>
            <polyline v-for="(h, i) in highs" :key="i" :points="line(h)" fill="none" stroke="#c02020" />
            <polyline :points="line(waves, P)" fill="none" stroke="#6098ff" />
            <g class="crisp" stroke="#00009c" stroke-width="3"><line v-for="l in levels" :key="l[0]" x1="0" :x2="w" :y1="l[1] + 0.5" :y2="l[1] + 0.5" /></g>
            <g class="tag">
              <g v-for="l in levels" :key="l[0]" fill="#00009c">
                <path :d="`M0 ${l[1] - 14.5}H${l[2] - 0.5}V${l[1]}`" fill="#fff" stroke="#00009c" />
                <text x="2" :y="l[1] - 3">{{ l[0] }}</text>
              </g>
              <g v-for="f in fibs" :key="f[0]">
                <rect :x="P(963) + 0.5" :y="f[1] - 14.5" width="45" height="15" fill="#fff" fill-opacity=".8" :stroke="f[2]" />
                <text :x="P(986)" :y="f[1] - 3" text-anchor="middle" :fill="f[2]">{{ f[0] }}</text>
              </g>
              <text :x="P(348)" y="637" fill="#a05808">88,20 %</text>
              <text :x="P(346)" y="650" fill="#90a8e0">100,00 %</text>
              <text :x="P(1320)" y="406" fill="#30b030">38,20 %</text>
              <text :x="P(1320)" y="450" fill="#ff8850">50,00 %</text>
              <text :x="P(1653)" y="394" fill="#ff8850">50,00 %</text>
              <text :x="P(1653)" y="454" fill="#3030d0">61,80 %</text>
              <text :x="P(1653)" y="528" fill="#60e060">76,20 %</text>
            </g>
            <g class="wave">
              <g v-for="m in marks" :key="m[0]">
                <rect :x="Math.round(P(m[1])) - 5.5" :y="m[2] - 7.5" width="12" height="16" fill="#fff" stroke="#6098ff" />
                <text :x="P(m[1]) + 0.5" :y="m[2] + 4" text-anchor="middle" fill="#6098ff">{{ m[0] }}</text>
              </g>
            </g>
            <g class="title"><text x="10" y="59">Q</text><text x="10" y="87">EEUU Tech 100 Cash (1€)</text></g>
            <text class="source" x="2" y="675">IT-Finance.com - Tiempo Real</text>
            <path class="rule" :d="`M${w + 0.5} 22V677`" />
            <g v-for="t in thousands" :key="t" class="axis"><path class="rule" :d="`M${w} ${Math.round(price(t)) + 0.5}h5`" /><text :x="w + 6" :y="price(t) + 4">{{ fmt(t) }}</text></g>
            <g v-for="t in priceTags" :key="t[0]" class="axis">
              <path :d="`M${w} ${t[1] + 0.5}h5`" :stroke="t[2]" />
              <rect class="chip" :x="w + 4.5" :y="t[1] - 6.5" width="50" height="13" /><text :x="w + 6" :y="t[1] + 4" :fill="t[2]">{{ t[0] }}</text>
            </g>
          </svg>
        </section>

        <section class="panel">
          <h2><i class="box half"></i>Sistema de trenes Doc v4 (f f)</h2>
          <svg :width="total" height="107" :viewBox="`0 677 ${total} 107`">
            <g class="grid"><line v-for="y in years" :key="y" :x1="X((y - 1995) * 4)" :x2="X((y - 1995) * 4)" y1="678" y2="783" /><line v-for="y in [705, 724, 742, 761]" :key="y" x1="0" :x2="w" :y1="y + 0.5" :y2="y + 0.5" /></g>
            <g class="crisp">
              <rect x="0" y="686" :width="X(123)" height="19" fill="#d8f5d8" />
              <rect x="0" y="762" :width="X(123)" height="17" fill="#ffdcda" />
              <line v-for="y in [686, 705, 761, 779]" :key="y" x1="0" :x2="X(123)" :y1="y + 0.5" :y2="y + 0.5" stroke="#000" />
            </g>
            <line x1="0" :x2="X(123)" y1="733.5" y2="733.5" stroke="#2020a0" stroke-width="2" stroke-dasharray="5 4" stroke-opacity=".85" />
            <polygon :points="strong" fill="#108010" fill-opacity=".45" />
            <polygon :points="ribbon" fill="#8040c0" fill-opacity=".25" />
            <polygon v-for="(s, i) in fastParts" :key="i" :points="s.area" :fill="s.fill" />
            <polyline :points="signalLine" fill="none" stroke="#333" stroke-dasharray="4 2" />
            <polyline :points="line(slowSignal, X, T)" fill="none" stroke="#222" stroke-width="3" stroke-dasharray="5 5" />
            <g stroke-width="4"><line v-for="(s, i) in slowParts" :key="i" :x1="s.x1" :x2="s.x2" :y1="s.y1" :y2="s.y2" :stroke="s.color" /></g>
            <g stroke-width="2" stroke-linecap="round"><line v-for="(s, i) in fastParts" :key="i" :x1="s.x1" :x2="s.x2" :y1="s.y1" :y2="s.y2" :stroke="s.color" /></g>
            <polygon v-for="k in downs" :key="'d' + k" :points="tri(X(k), T(fast[k + 3]), false)" fill="#b80000" />
            <polygon v-for="k in ups" :key="'u' + k" :points="tri(X(k), T(fast[k + 3]) + 1, true)" fill="#0000b8" />
            <path class="rule" :d="`M${w + 0.5} 677V784`" />
            <g v-for="(t, i) in oscTags" :key="i" class="axis"><path class="rule" :d="`M${w} ${t[0] + 0.5}h4`" /><rect v-if="t[3]" class="chip" :x="w + 4.5" :y="t[0] - 6.5" :width="t[3]" height="13" /><text v-if="t[1]" :x="w + 6" :y="t[0] + 4" :fill="t[2]">{{ t[1] }}</text></g>
          </svg>
        </section>

        <section class="panel">
          <h2><i class="box grey"></i>Willy Doc (t)</h2>
          <svg :width="total" height="67" :viewBox="`0 784 ${total} 67`">
            <g class="grid"><line v-for="y in years" :key="y" :x1="X((y - 1995) * 4)" :x2="X((y - 1995) * 4)" y1="785" y2="850" /><line v-for="y in [819, 848]" :key="y" x1="0" :x2="w" :y1="y + 0.5" :y2="y + 0.5" /></g>
            <g class="crisp">
              <rect v-for="b in buyBands" :key="b[0]" :x="X(b[0])" y="785" :width="X(b[1]) - X(b[0])" height="66" fill="#c0c0fc" />
              <rect v-for="b in sellBands" :key="b[0]" :x="X(b[0])" y="785" :width="X(b[1]) - X(b[0])" height="66" fill="#fca4a4" />
              <rect :x="X(22.5)" y="785" :width="X(1) - X(0)" height="66" fill="#b86c6c" /><rect :x="X(62.5)" y="785" :width="X(1) - X(0)" height="66" fill="#6cc06c" />
            </g>
            <polygon :points="willyHigh" fill="#40a030" fill-opacity=".45" /><polygon :points="willyLow" fill="#802020" fill-opacity=".4" />
            <g fill="none">
              <path :d="`M0 790.5H${X(123)}M0 848.5H${X(123)}`" stroke="#000" stroke-dasharray="5 4" />
              <path :d="`M0 804.5H${X(123)}`" stroke="#2020b0" stroke-width="2" /><path :d="`M0 819.5H${X(123)}`" stroke="#2020a0" stroke-width="2" stroke-opacity=".85" stroke-dasharray="5 4" /><path :d="`M0 834.5H${X(123)}`" stroke="#d02020" stroke-width="2" />
            </g>
            <g stroke-width="4"><line v-for="(s, i) in willyParts" :key="i" :x1="s.x1" :x2="s.x2" :y1="s.y1" :y2="s.y2" :stroke="s.color" /></g>
            <polygon :points="tri(X(22), 819, false, 6)" fill="#b80000" /><polygon :points="tri(X(62), 821, true, 6)" fill="#0000c8" />
            <path class="rule" :d="`M${w + 0.5} 784V851`" />
            <g v-for="(t, i) in willyTags" :key="i" class="axis"><path :d="`M${w} ${t[0] + 0.5}h4`" :stroke="t[2]" /><rect class="chip" :x="w + 4.5" :y="t[0] - 6.5" :width="t[3]" height="13" /><text :x="w + 6" :y="t[0] + 4" :fill="t[2]">{{ t[1] }}</text></g>
          </svg>
        </section>

        <section class="panel">
          <h2><i class="box grey"></i>Awesome Evolution Doc</h2>
          <svg :width="total" height="85" :viewBox="`0 851 ${total} 85`">
            <g class="grid"><line v-for="y in years" :key="y" :x1="X((y - 1995) * 4)" :x2="X((y - 1995) * 4)" y1="852" y2="935" /><line v-for="y in [865, 879, 894, 908]" :key="y" x1="0" :x2="w" :y1="y + 0.5" :y2="y + 0.5" /></g>
            <g class="crisp">
              <rect v-for="(b, i) in gapBars" :key="'g' + i" :x="b.x" :y="b.y" width="10" :height="b.h" :fill="b.color" />
              <rect v-for="(b, i) in bars" :key="i" :x="b.x" :y="b.y" :width="b.w" :height="b.h" :fill="b.color" />
            </g>
            <line x1="0" :x2="X(123)" y1="923.5" y2="923.5" stroke="#4040ff" stroke-width="2" />
            <g stroke-width="3"><line v-for="(s, i) in momentumParts" :key="i" :x1="s.x1" :x2="s.x2" :y1="s.y1" :y2="s.y2" :stroke="s.color" /></g>
            <g stroke-width="4"><line v-for="(s, i) in baseParts" :key="i" :x1="s.x1" :x2="s.x2" :y1="s.y1" :y2="s.y2" :stroke="s.color" /></g>
            <polygon v-for="k in yellowMarks" :key="'y' + k" :points="tri(X(k), at(k), false)" fill="#f4f000" /><polygon v-for="k in cyanMarks" :key="'c' + k" :points="tri(X(k), at(k), true)" fill="#00f0f8" />
            <path class="rule" :d="`M${w + 0.5} 851V936`" />
            <g v-for="(t, i) in awesomeTags" :key="i" class="axis"><path class="rule" :d="`M${w} ${t[0] + 0.5}h4`" /><rect v-if="t[3]" class="chip" :x="w + 4.5" :y="t[0] - 6.5" :width="t[3]" height="13" /><text v-if="t[1]" :x="w + 6" :y="t[0] + 4" :fill="t[2]">{{ t[1] }}</text></g>
          </svg>
        </section>

        <section class="panel">
          <h2><i class="box half flip"></i>Barra Fuerza Fondo Mercado v4 (f)</h2>
          <svg :width="total" height="60" :viewBox="`0 936 ${total} 60`">
            <g class="grid"><line v-for="y in years" :key="y" :x1="X((y - 1995) * 4)" :x2="X((y - 1995) * 4)" y1="937" y2="995" /><line v-for="y in [941, 993]" :key="y" x1="0" :x2="w" :y1="y + 0.5" :y2="y + 0.5" /></g>
            <g class="crisp">
              <rect x="1" y="937" :width="X(123.5) - 1" height="58" fill="#40ff40" />
              <rect v-for="b in neutral" :key="b[0]" :x="X(b[0])" y="937" :width="X(b[1]) - X(b[0])" height="58" fill="#ffff84" />
              <line x1="0" :x2="X(123)" y1="967.5" y2="967.5" stroke="#000" />
            </g>
            <path class="rule" :d="`M${w + 0.5} 936V996`" />
            <g v-for="(t, i) in forceTags" :key="i" class="axis"><path class="rule" :d="`M${w} ${t[0] + 0.5}h4`" /><rect v-if="t[3]" class="chip" :x="w + 4.5" :y="t[0] - 6.5" :width="t[3]" height="13" /><text :x="w + 6" :y="t[0] + 3" :fill="t[2]">{{ t[1] }}</text></g>
          </svg>
        </section>

        <svg class="time" :width="total" height="15" :viewBox="`0 996 ${total} 15`">
          <g v-for="y in years" :key="y" class="axis"><path class="rule" :d="`M${X((y - 1995) * 4)} 995v3`" /><text :x="X((y - 1995) * 4)" y="1008" text-anchor="middle">{{ y }}</text></g>
        </svg>
      </main>
    </div>

    <footer class="bottom">
      <button class="pencil" aria-label="Dibujar"><svg width="20" height="16" viewBox="0 0 20 16"><path d="M2 14V4l4 9 3-7 2 8" fill="none" stroke="#c02020" stroke-width="1.5" /><path d="M9 12l6-9 3 2-6 9-3 1z" fill="#f0d040" stroke="#805010" /></svg></button>
      <button aria-label="Compartir"><svg width="18" height="16" viewBox="0 0 18 16"><path d="M12 3L4 8l8 4" fill="none" stroke="#fff" stroke-width="1.5" /><g fill="#f4f4f4" stroke="#777" stroke-width=".7"><circle cx="4" cy="8" r="2.5" /><circle cx="12" cy="3.5" r="2.5" /><circle cx="12" cy="12" r="2.5" /></g><path d="M12 12h5l-2.5 3z" /></svg></button>
      <button aria-label="Comentarios"><svg width="18" height="16" viewBox="0 0 18 16"><rect x="2" y="1" width="10" height="8" rx="2" fill="#80a8e8" /><path d="M5 5h9q2 0 2 2v4q0 2-2 2h-2l-2 2v-2H7q-2 0-2-2z" fill="#2860e0" /><path d="M8 9h1.5M10.5 9H12M13 9h1.5" stroke="#fff" stroke-width="1.5" /></svg></button>
      <button aria-label="Noticias"><svg width="18" height="16" viewBox="0 0 18 16"><rect x="4" y="2" width="10" height="12" fill="#fff" stroke="#555" /><path d="M6 5h6M6 11h6" stroke="#444" /><path d="M6 9l3-3 3 3" fill="none" stroke="#d02020" stroke-width="1.5" /><path d="M11 2h3v4z" fill="#20a030" /></svg></button>
      <button aria-label="Órdenes"><svg width="18" height="16" viewBox="0 0 18 16"><path d="M2 3h8M4 6h6M2 9h8M4 12h6" stroke="#10b030" stroke-width="2.5" /><path d="M10 3h4M10 6h6M10 9h4M10 12h6" stroke="#e02020" stroke-width="2.5" /></svg></button>
      <button aria-label="Ventanas"><svg width="18" height="16" viewBox="0 0 18 16"><rect x="2" y="1.5" width="10" height="8" fill="#fff" stroke="#2860c0" stroke-width="1.5" /><rect x="6" y="6" width="10" height="8" fill="#fff" stroke="#2860c0" stroke-width="1.5" /><path d="M8 11l2-2 2 2 2-2" fill="none" stroke="#10a030" /></svg></button>
      <button class="collapse" aria-label="Contraer"><svg width="8" height="8" viewBox="0 0 8 8"><path d="M4 1L1 4l3 3M7 1L4 4l3 3" fill="none" stroke="#445" /></svg></button>
      <div class="scroll">
        <button aria-label="Anterior"><svg class="chev" viewBox="0 0 8 8"><path d="M5 1.5L2.5 4 5 6.5" /></svg></button>
        <div class="track"><div class="thumb"></div></div>
        <button aria-label="Siguiente"><svg class="chev" viewBox="0 0 8 8"><path d="M3 1.5L5.5 4 3 6.5" /></svg></button>
      </div>
      <div class="actions">
        <button aria-label="Deshacer"><svg viewBox="0 0 16 16"><path d="M2 6l4-4v3q8 0 6 9-1-5-6-5v2z" fill="#5a92d8" /></svg></button>
        <button aria-label="Rehacer"><svg viewBox="0 0 16 16"><path d="M14 6l-4-4v3q-8 0-6 9 1-5 6-5v2z" fill="#6a9cd0" /></svg></button>
        <button aria-label="Ajustes"><svg viewBox="0 0 16 16"><rect x="1" y="8" width="5" height="5" fill="#e03030" /><rect x="9" y="2" width="6" height="11" fill="#20c030" /><path d="M3 14l5-5V5l3-2v3h2l1 2-4 2-5 5z" fill="#fff" stroke="#222" /></svg></button>
        <button aria-label="Escala"><svg viewBox="0 0 16 16"><circle cx="6" cy="6" r="4.5" fill="#dde" stroke="#444" /><path d="M9 9l5 5" stroke="#222" stroke-width="2.5" /><path d="M14 1v8M12.5 2.5L14 1l1.5 1.5M12.5 7.5L14 9l1.5-1.5M1 14h8" fill="none" stroke="#1818ff" stroke-width="1.5" /></svg></button>
        <button aria-label="Alejar"><svg viewBox="0 0 16 16"><circle cx="6" cy="6" r="4.5" fill="#fff" stroke="#333" /><path d="M9 9l5 5" stroke="#222" stroke-width="2.5" /><path d="M3.5 6h5" stroke="#1818ff" stroke-width="1.5" /></svg></button>
        <button aria-label="Acercar"><svg viewBox="0 0 16 16"><circle cx="6" cy="6" r="4.5" fill="#fff" stroke="#333" /><path d="M9 9l5 5" stroke="#222" stroke-width="2.5" /><path d="M3.5 6h5M6 3.5v5" stroke="#1818ff" stroke-width="1.5" /></svg></button>
        <button aria-label="Ir al final"><svg viewBox="0 0 16 16"><path d="M1 3h14" stroke="#333" stroke-width="3" stroke-dasharray="2 1" /><path d="M8 6v4" stroke="#1060f0" stroke-width="3" /><path d="M4 9h8l-4 5z" fill="#1060f0" /></svg></button>
      </div>
    </footer>
  </div>
</template>

<style>
body { margin: 0; background: #fff; }
</style>

<style scoped>
.app { --line: #6f8794; --bar: #9dbbc9; display: flex; flex-direction: column; min-height: 100vh; overflow: hidden; font: bold 10px/12px "Liberation Sans", Arial, sans-serif; color: #111; }
* { box-sizing: border-box; }
button, select { font: inherit; color: inherit; background: none; border: 0; padding: 0; margin: 0; }
svg { display: block; }
.chev { width: 8px; height: 8px; fill: none; stroke: #333; stroke-width: 1.5; }
.toolbar { display: flex; height: 22px; align-items: stretch; background: linear-gradient(#bbd5e3, #9ebccb); border-top: 1px solid #4c6471; border-bottom: 1px solid #4c6471; border-left: 1px solid #4c6471; font-size: 9px; }
.cell { display: flex; align-items: center; border-right: 1px solid #6b8592; flex: none; }
.logo { width: 22px; justify-content: center; }
.link { width: 16px; justify-content: center; }
.pick { position: relative; }
.pick select { appearance: none; width: 100%; height: 18px; padding: 0 15px 0 4px; }
.pick .chev { position: absolute; right: 5px; top: 7px; pointer-events: none; }
.market { width: 59px; }
.period { width: 69px; }
.amount { width: 84px; }
.group { gap: 4px; padding: 0 3px; }
.frames { width: 193px; }
.unitset { width: 92px; }
.group button { flex: 1 1 auto; height: 16px; padding: 0 1px; border: 1px solid #7d98a6; border-radius: 3px; line-height: 13px; }
.group button.on { background: #8aa0ac; border-color: #71868f; }
.indic { width: 85px; gap: 3px; padding-left: 4px; font-size: 10px; }
.more { width: 14px; justify-content: center; }
.status { display: flex; align-items: center; padding-left: 8px; }
.dot { width: 8px; height: 8px; border-radius: 50%; background: #858585; margin: 0 5px 0 8px; }
.loss { width: 38px; height: 14px; line-height: 14px; text-align: center; background: #f05050; color: #fff; border-radius: 2px; font-weight: normal; }
.date { padding: 0 4px; }
.instrument { height: 14px; line-height: 12px; padding: 0 3px; background: #c5d8a0; border: 1px solid #aabf80; border-radius: 3px; font-weight: normal; }
.wincontrols { display: flex; align-items: center; margin-left: auto; }
.wincontrols button { width: 14px; height: 20px; display: grid; place-items: center; }
.wincontrols button svg { width: 10px; height: 10px; fill: none; stroke: #6c828d; stroke-width: 1.5; }
.wincontrols .sync { width: 21px; border-left: 1px solid #6b8592; border-right: 1px solid #6b8592; }
.wincontrols .sync svg { width: 16px; height: 16px; stroke: none; }
.body { display: flex; flex: 1; min-height: 0; }
.tools { width: 28px; flex: none; display: flex; flex-direction: column; background: var(--bar); border-left: 1px solid #4c6471; border-right: 1px solid var(--line); }
.tools button { display: grid; place-items: center; width: 26px; }
.tools .up { height: 12px; border-bottom: 1px solid #7d98a6; }
.tools .list { display: flex; flex-direction: column; flex: 1 1 0; min-height: 0; }
.tools .list button { flex: 1 1 0; min-height: 0; }
.tools .list svg { width: 28px; height: 22px; margin: 0 -1px; }
.tools .list button.on { background: #8a9fab; border: 1px solid #748b97; border-radius: 3px; width: 22px; margin-left: 2px; }
.peek { display: block; width: 6px; height: 2px; margin: 5px 0 0 10px; background: #d01818; }
.tools .down { height: 17px; border-top: 1px solid var(--line); border-bottom: 1px solid var(--line); background: linear-gradient(#cfe2ec, #a4c0cd); }
.tools .extra { height: 32px; }
.tools .dots { height: 23px; }
.charts { flex: 1; min-width: 0; overflow: hidden; }
.panel { position: relative; border-bottom: 1px solid var(--line); margin-bottom: -1px; }
.panel svg { overflow: hidden; }
.legend { position: absolute; top: 1px; left: 0; display: flex; height: 15px; background: #d0dde4; border-bottom: 1px solid var(--line); }
.legend button { display: flex; align-items: center; gap: 3px; padding: 0 1px 0 3px; border-right: 1px solid var(--line); white-space: nowrap; }
.legend .arrows { width: 31px; padding-left: 2px; }
.legend .menu { width: 17px; padding-left: 4px; }
.box { display: block; flex: none; width: 8px; height: 8px; border: 1px solid #6f8794; }
.grey { background: #748c98; }
.black { background: #000; border-color: #000; }
.multi { border: 0; background: linear-gradient(90deg, #f02020 0 2px, #ffc000 2px 4px, #20c0f0 4px 5px, #d02090 5px 7px, #ff8000 7px); }
.half { border: 0; background: linear-gradient(90deg, #748c98 50%, #000 50%); }
.flip { background: linear-gradient(90deg, #000 50%, #748c98 50%); }
h2 { position: absolute; left: 0; top: 0; margin: 0; height: 17px; display: flex; align-items: center; gap: 3px; padding: 0 2px 0 3px; font: inherit; background: #d0dde4; border: 1px solid var(--line); border-left: 0; white-space: nowrap; z-index: 1; }
.grid line { stroke: #e0e0e0; stroke-dasharray: 1 3; shape-rendering: crispEdges; }
.crisp, .rule, .chip { shape-rendering: crispEdges; }
.rule { fill: none; stroke: #6f8794; }
.dotted { fill: none; stroke-dasharray: 1 3; }
.chip { fill: #f2f4f5; stroke: #6f8794; }
.tag text, .axis text { font: bold 9px "Liberation Sans", Arial, sans-serif; }
.wave text { font: bold 11px "Liberation Sans", Arial, sans-serif; }
.title text { font: bold 24px "Liberation Sans", Arial, sans-serif; }
.source { font: normal 10px "Liberation Sans", Arial, sans-serif; }
.bottom { display: flex; align-items: stretch; height: 18px; background: var(--bar); border-top: 1px solid var(--line); }
.bottom > button { width: 21px; display: grid; place-items: center; }
.bottom > .pencil { width: 28px; background: #879ba6; }
.bottom > .collapse { width: 14px; }
.scroll { display: flex; flex: 1; margin: 3px 4px 2px 0; border: 1px solid #6b8592; }
.scroll button { width: 13px; flex: none; display: grid; place-items: center; background: #b4cfdc; }
.track { flex: 1; background: #98b1be; border-left: 1px solid #6b8592; border-right: 1px solid #6b8592; }
.thumb { width: 82%; height: 100%; margin-left: 17%; background: linear-gradient(#bfdde9, #a3c2d0); border-left: 1px solid #6b8592; border-right: 1px solid #6b8592; }
.actions { display: flex; gap: 6px; }
.actions button { width: 16px; display: grid; place-items: center; }
.actions svg { width: 16px; height: 16px; }
</style>
